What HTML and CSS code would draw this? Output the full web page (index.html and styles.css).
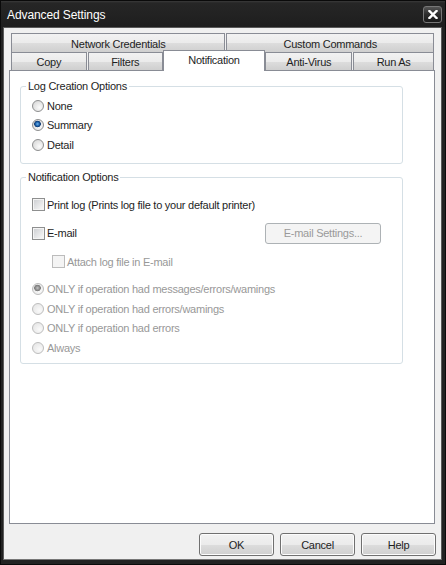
FILE: index.html
```html
<!DOCTYPE html>
<html lang="en">
<head>
  <meta charset="UTF-8" />
  <title>Advanced Settings</title>
  <link rel="stylesheet" href="styles.css">
</head>
<body>
  <div class="window">
    <div class="titlebar">
      <span class="title">Advanced Settings</span>
      <span class="close">
        <svg width="10" height="9" viewBox="0 0 10 9"><path d="M1.5 1 L8.5 8 M8.5 1 L1.5 8" stroke="#fff" stroke-width="2.4" stroke-linecap="square"/></svg>
      </span>
    </div>

    <div class="client">
      <div class="tabs">
        <div class="tab-row upper">
          <div class="tab tab-net">Network Credentials</div>
          <div class="tab tab-cmd">Custom Commands</div>
        </div>
        <div class="tab-row lower">
          <div class="tab tab-copy">Copy</div>
          <div class="tab tab-filters">Filters</div>
          <div class="tab tab-notif active">Notification</div>
          <div class="tab tab-av">Anti-Virus</div>
          <div class="tab tab-runas">Run As</div>
        </div>
      </div>

      <div class="panel">
        <fieldset class="group group-log">
          <legend>Log Creation Options</legend>
          <div class="opt"><span class="radio"></span>None</div>
          <div class="opt"><span class="radio on"></span>Summary</div>
          <div class="opt"><span class="radio"></span>Detail</div>
        </fieldset>

        <fieldset class="group group-notify">
          <legend>Notification Options</legend>
          <div class="row row-print"><span class="check"></span>Print log (Prints log file to your default printer)</div>
          <div class="row row-email">
            <span class="check"></span>E-mail
            <button class="btn-settings" disabled>E-mail Settings...</button>
          </div>
          <div class="row row-attach off"><span class="check"></span>Attach log file in E-mail</div>
          <div class="when">
            <div class="opt off"><span class="radio on"></span>ONLY if operation had messages/errors/wamings</div>
            <div class="opt off"><span class="radio"></span>ONLY if operation had errors/wamings</div>
            <div class="opt off"><span class="radio"></span>ONLY if operation had errors</div>
            <div class="opt off"><span class="radio"></span>Always</div>
          </div>
        </fieldset>
      </div>

      <div class="actions">
        <button class="btn">OK</button>
        <button class="btn">Cancel</button>
        <button class="btn">Help</button>
      </div>
    </div>
  </div>
</body>
</html>
```

FILE: styles.css
```css
body {
  margin: 0;
  background: #1c1c1c;
  font-family: "Liberation Sans", Arial, sans-serif;
  font-size: 11px;
  letter-spacing: -0.25px;
  color: #1e1e1e;
}
.window {
  width: 446px;
  height: 565px;
  box-sizing: border-box;
  border: 1px solid #0a0a0a;
  padding: 0 3px 4px 2px;
  background: #222;
  display: flex;
  flex-direction: column;
}
.titlebar {
  height: 26px;
  flex: none;
  display: flex;
  align-items: center;
  justify-content: space-between;
  background: linear-gradient(#3a3a3a 0, #262626 2px, #1e1e1e 100%);
  margin: 0 -3px 0 -2px;
  padding: 0 3px 0 6px;
}
.title {
  color: #fff;
  font-size: 12px;
  letter-spacing: -0.1px;
  margin-top: 2px;
}
.close {
  width: 19px;
  height: 17px;
  box-sizing: border-box;
  border: 1px solid #777;
  border-radius: 3px;
  background: linear-gradient(#555, #2c2c2c 50%, #1a1a1a);
  display: flex;
  align-items: center;
  justify-content: center;
  margin-top: 1px;
}
.client {
  flex: 1;
  background: #f0f0f0;
  border: 1px solid #5a5a5a;
  border-bottom-color: #777;
  padding: 5px 6px 0 5px;
  display: flex;
  flex-direction: column;
}

/* tabs */
.tabs {
  margin: 0 1px 0 2px;
}
.tab-row {
  display: flex;
}
.tab {
  box-sizing: border-box;
  border: 1px solid #898c95;
  border-bottom: none;
  margin-right: 1px;
  background: linear-gradient(#f2f2f2 0, #ebebeb 50%, #dddddd 51%, #cfcfcf 100%);
  display: flex;
  align-items: center;
  justify-content: center;
  padding-top: 1px;
}
.upper .tab { height: 19px; }
.lower .tab { height: 18px; }
.tab-net { width: 215px; }
.tab-cmd { width: 208px; margin-right: 0; }
.tab-copy { width: 76px; }
.tab-filters { width: 75px; margin-right: 0; }
.tab-notif { width: 103px; margin-right: 0; }
.tab-av { width: 87px; }
.tab-runas { width: 81px; margin-right: 0; }
.lower .tab.active {
  background: #fff;
  height: 21px;
  margin-top: -2px;
  margin-bottom: -1px;
  padding-top: 0;
  padding-bottom: 3px;
  position: relative;
  z-index: 1;
}

/* panel */
.panel {
  height: 454px;
  box-sizing: border-box;
  background: #fff;
  border: 1px solid #898c95;
  padding: 9px 31px 0 10px;
}
.group {
  margin: 0;
  padding: 0;
  border: 1px solid #d5dfe5;
  border-radius: 3px;
}
.group legend {
  margin-left: 5px;
  padding: 0 2px;
  line-height: 13px;
}
.group-log {
  padding: 3px 0 8px 0;
}
.group-notify {
  margin-top: 7px;
  padding: 11px 0 5px 0;
}
.opt, .row {
  display: flex;
  align-items: center;
  padding-left: 11px;
}
.opt {
  height: 19.5px;
}
.row {
  height: 20px;
}
.row-email {
  height: 21px;
  margin-top: 8px;
  padding-right: 21px;
}
.row-attach {
  margin-top: 8px;
  padding-left: 31px;
}
.when {
  margin-top: 8px;
}
.off {
  color: #989898;
}

.radio {
  width: 12px;
  height: 12px;
  box-sizing: border-box;
  border-radius: 50%;
  border: 1px solid #8d8e8f;
  background: radial-gradient(circle at 65% 65%, #fbfbfb 0, #dcdcdc 75%);
  margin-right: 3px;
  flex: none;
}
.radio.on {
  background:
    radial-gradient(circle at 45% 40%, #6fb6ef 0, #1d5fa8 2px, #0e3a72 3px, transparent 3.6px),
    radial-gradient(circle at 65% 65%, #fbfbfb 0, #dcdcdc 75%);
}
.off .radio {
  border-color: #bdbdbd;
  background: radial-gradient(circle at 65% 65%, #fafafa 0, #e8e8e8 75%);
}
.off .radio.on {
  background:
    radial-gradient(circle at 45% 40%, #c4c4c4 0, #8e8e8e 2px, #7a7a7a 3px, transparent 3.6px),
    radial-gradient(circle at 65% 65%, #fafafa 0, #e8e8e8 75%);
}
.check {
  width: 13px;
  height: 13px;
  box-sizing: border-box;
  border: 1px solid #8e8f8f;
  padding: 1px;
  background: linear-gradient(135deg, #cfd1d4, #f7f7f7) content-box, #f4f4f4;
  margin-right: 2px;
  flex: none;
}
.off .check {
  border-color: #bcbcbc;
  background: #f4f4f4;
}

/* buttons */
.btn-settings {
  margin-left: auto;
  width: 116px;
  height: 21px;
  box-sizing: border-box;
  border: 1px solid #adb2b5;
  border-radius: 3px;
  background: #f4f4f4;
  color: #9a9a9a;
  font: inherit;
  letter-spacing: inherit;
  padding: 0;
}
.actions {
  display: flex;
  justify-content: flex-end;
  gap: 6px;
  margin: 9px -1px 0 0;
}
.btn {
  width: 75px;
  height: 23px;
  box-sizing: border-box;
  border: 1px solid #707070;
  border-radius: 3px;
  background: linear-gradient(#f2f2f2 0, #ebebeb 50%, #dddddd 51%, #cfcfcf 100%);
  box-shadow: inset 0 0 0 1px #fcfcfc;
  font: inherit;
  letter-spacing: inherit;
  color: #1e1e1e;
  padding: 0;
}
```
